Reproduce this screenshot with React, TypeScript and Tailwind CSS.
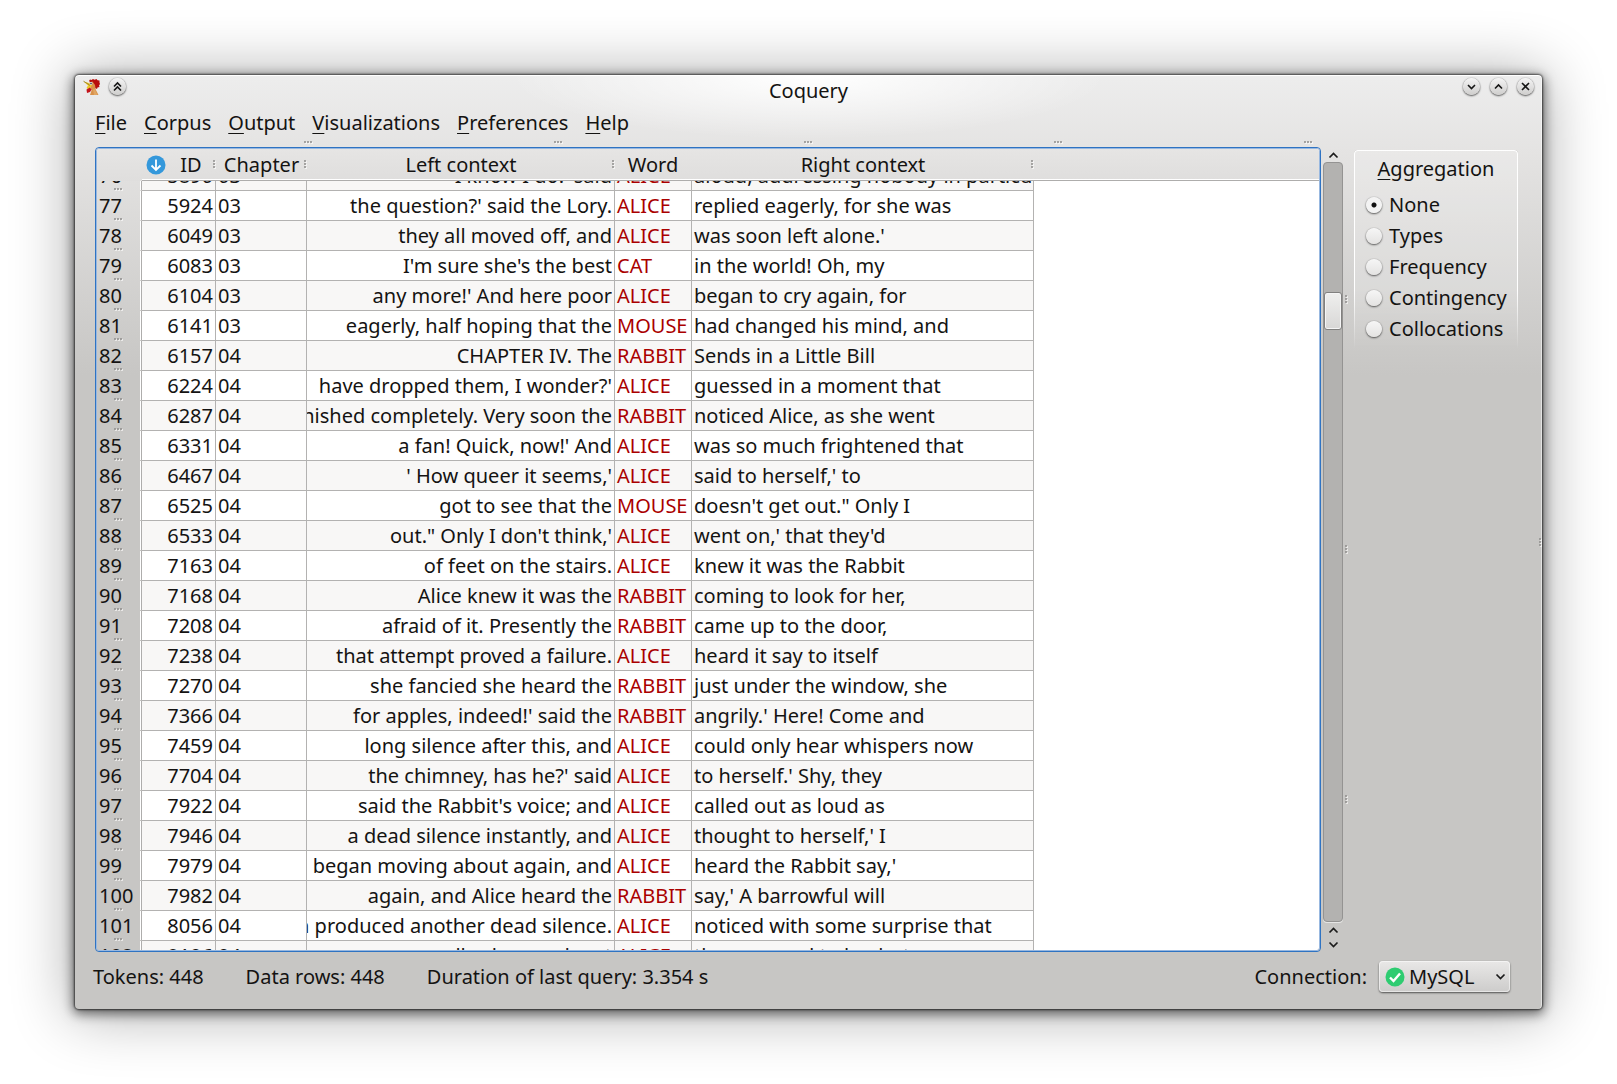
import React from "react";

type Row = [number, number, string, string, string, string];

const rows: Row[] = [
  [76, 5890, "03", "'I know I do!' said", "ALICE", "aloud, addressing nobody in particular"],
  [77, 5924, "03", "the question?' said the Lory.", "ALICE", "replied eagerly, for she was"],
  [78, 6049, "03", "they all moved off, and", "ALICE", "was soon left alone.'"],
  [79, 6083, "03", "I'm sure she's the best", "CAT", "in the world! Oh, my"],
  [80, 6104, "03", "any more!' And here poor", "ALICE", "began to cry again, for"],
  [81, 6141, "03", "eagerly, half hoping that the", "MOUSE", "had changed his mind, and"],
  [82, 6157, "04", "CHAPTER IV. The", "RABBIT", "Sends in a Little Bill"],
  [83, 6224, "04", "have dropped them, I wonder?'", "ALICE", "guessed in a moment that"],
  [84, 6287, "04", "vanished completely. Very soon the", "RABBIT", "noticed Alice, as she went"],
  [85, 6331, "04", "a fan! Quick, now!' And", "ALICE", "was so much frightened that"],
  [86, 6467, "04", "' How queer it seems,'", "ALICE", "said to herself,' to"],
  [87, 6525, "04", "got to see that the", "MOUSE", "doesn't get out.\" Only I"],
  [88, 6533, "04", "out.\" Only I don't think,'", "ALICE", "went on,' that they'd"],
  [89, 7163, "04", "of feet on the stairs.", "ALICE", "knew it was the Rabbit"],
  [90, 7168, "04", "Alice knew it was the", "RABBIT", "coming to look for her,"],
  [91, 7208, "04", "afraid of it. Presently the", "RABBIT", "came up to the door,"],
  [92, 7238, "04", "that attempt proved a failure.", "ALICE", "heard it say to itself"],
  [93, 7270, "04", "she fancied she heard the", "RABBIT", "just under the window, she"],
  [94, 7366, "04", "for apples, indeed!' said the", "RABBIT", "angrily.' Here! Come and"],
  [95, 7459, "04", "long silence after this, and", "ALICE", "could only hear whispers now"],
  [96, 7704, "04", "the chimney, has he?' said", "ALICE", "to herself.' Shy, they"],
  [97, 7922, "04", "said the Rabbit's voice; and", "ALICE", "called out as loud as"],
  [98, 7946, "04", "a dead silence instantly, and", "ALICE", "thought to herself,' I"],
  [99, 7979, "04", "began moving about again, and", "ALICE", "heard the Rabbit say,'"],
  [100, 7982, "04", "again, and Alice heard the", "RABBIT", "say,' A barrowful will"],
  [101, 8056, "04", "which produced another dead silence.", "ALICE", "noticed with some surprise that"],
  [102, 8106, "04", "small cakes, and, not", "ALICE", "they seemed to be, but"],
];

const menus = ["File", "Corpus", "Output", "Visualizations", "Preferences", "Help"];
const modes = ["None", "Types", "Frequency", "Contingency", "Collocations"];

function Grip({ vertical = false, className = "" }: { vertical?: boolean; className?: string }) {
  return (
    <svg
      width={vertical ? 3 : 9}
      height={vertical ? 9 : 3}
      className={`block shrink-0 ${className}`}
      aria-hidden="true"
    >
      {[0, 3, 6].map((p) => (
        <g key={p}>
          <rect x={vertical ? 1 : p + 1} y={vertical ? p + 1 : 1} width="2" height="2" fill="#fff" fillOpacity=".6" />
          <rect x={vertical ? 0 : p} y={vertical ? p : 0} width="2" height="2" fill="#8d8c8b" fillOpacity=".75" />
        </g>
      ))}
    </svg>
  );
}

function Rooster() {
  return (
    <svg width="18" height="18" viewBox="0 0 18 18" aria-hidden="true">
      <path d="M6 3 7 1.500 8.500 2 10 1l1.500.8L13.500 1l1 1.200 2 .3v2l.5 1.500-1 1.500.5 1.500-2 .5-.5 1.500-2-1-3-4z" fill="#b80d0d" />
      <path d="M6.500 4.500 9.500 3.500l2.500 3.500.7 4.500L15.500 17H7l1.500-4.500-1-3L6 8z" fill="#d9914a" />
      <path d="M10 11.500 12 11l1 3 1.500 3H11z" fill="#e0a663" />
      <path d="M.5 3.500 6 5l3 2-1.500 2.500-2.500 1.700-1.500-1.200L5 7.500z" fill="#edc629" />
      <path d="M.5 3.200 5 6 7 7.500" stroke="#8d7a22" strokeWidth=".8" fill="none" />
      <path d="M3.500 11.500 7 9.500l1.500 2-1.500 2.500-3 1z" fill="#c3141b" />
      <circle cx="8" cy="5.500" r="1.400" fill="#d8dbe4" />
      <circle cx="8" cy="5.500" r=".8" fill="#333a4a" />
    </svg>
  );
}

function RoundButton({ label, children }: { label: string; children: React.ReactNode }) {
  return (
    <button
      aria-label={label}
      className="flex size-[17px] items-center justify-center rounded-full bg-linear-to-b from-[#f4f4f4] to-[#cfcecd] shadow-[0_1px_2px_rgba(0,0,0,0.6),0_0_1px_rgba(0,0,0,0.5)]"
    >
      <svg width="13" height="13" viewBox="0 0 13 13" fill="none" stroke="#161616" strokeWidth="1.600">
        {children}
      </svg>
    </button>
  );
}

function Arrow({ down = false }: { down?: boolean }) {
  return (
    <svg width="11" height="8" viewBox="0 0 11 8" fill="none" stroke="#1b1b1b" strokeWidth="1.700" aria-hidden="true">
      <path d={down ? "M1.500 1.500 5.500 5.500 9.500 1.500" : "M1.500 6.500 5.500 2.500 9.500 6.500"} />
    </svg>
  );
}

function HeadCell({ children, sorted = false, grip = true }: { children: React.ReactNode; sorted?: boolean; grip?: boolean }) {
  return (
    <th scope="col" className="h-8 border-b border-[#aeadac] bg-linear-to-b from-[#e6e5e4] to-[#dfdedd] p-0 font-normal leading-[27px] shadow-[inset_0_-1px_0_#fff]">
      <div className="flex items-center">
        {sorted && (
          <svg width="20" height="20" viewBox="0 0 20 20" className="ml-1 shrink-0" aria-label="Sorted ascending">
            <circle cx="10" cy="10" r="9.500" fill="#3498db" />
            <path d="M10 4.500V15M5.500 10.500 10 15l4.500-4.500" stroke="#fff" strokeWidth="1.800" fill="none" />
          </svg>
        )}
        <span className="flex-1 pl-[3px]">{children}</span>
        {grip ? <Grip vertical /> : <span className="w-1" />}
      </div>
    </th>
  );
}

function ResultsTable() {
  return (
    <div className="min-w-0 flex-1 overflow-hidden rounded-[4px] border border-[#2f73c2]">
      <div className="relative h-full overflow-hidden rounded-[3px] border border-[#98b8e0]">
        <div className="absolute inset-y-0 left-[45px] right-0 -z-10 bg-white" />
        <table className="-mt-5 w-full table-fixed border-separate border-spacing-0">
          <colgroup>
            <col className="w-[45px]" />
            <col className="w-[74px]" />
            <col className="w-[91px]" />
            <col className="w-[308px]" />
            <col className="w-[77px]" />
            <col className="w-[342px]" />
            <col />
          </colgroup>
          <thead className="sticky top-0 z-10">
            <tr>
              <td className="bg-linear-to-b from-[#e6e5e4] to-[#dfdedd]" />
              <HeadCell sorted>ID</HeadCell>
              <HeadCell>Chapter</HeadCell>
              <HeadCell>Left context</HeadCell>
              <HeadCell grip={false}>Word</HeadCell>
              <HeadCell>Right context</HeadCell>
              <td className="border-b border-[#aeadac] bg-linear-to-b from-[#e6e5e4] to-[#dfdedd] shadow-[inset_0_-1px_0_#fff]" />
            </tr>
          </thead>
          <tbody>
            {rows.map(([n, id, chapter, left, word, right]) => (
              <tr key={n} className="group h-[30px] whitespace-nowrap leading-[29px]">
                <th scope="row" className="relative border-b border-r border-b-transparent border-r-[#aeadac] p-0 pl-0.5 text-left font-normal shadow-[inset_-1px_0_0_#fff]">
                  {n}
                  <Grip className="absolute -bottom-px left-[17px]" />
                </th>
                <td className="border-b border-r border-[#b3b2b1] p-0 pr-0.5 text-right group-even:bg-white group-odd:bg-[#f8f7f6]">{id}</td>
                <td className="border-b border-r border-[#b3b2b1] p-0 pl-0.5 group-even:bg-white group-odd:bg-[#f8f7f6]">{chapter}</td>
                <td className="border-b border-r border-[#b3b2b1] p-0 pr-0.5 group-even:bg-white group-odd:bg-[#f8f7f6]">
                  <div className="flex justify-end overflow-hidden">{left}</div>
                </td>
                <td className="border-b border-r border-[#b3b2b1] p-0 pl-0.5 text-[#aa0000] group-even:bg-white group-odd:bg-[#f8f7f6]">{word}</td>
                <td className="overflow-hidden border-b border-r border-[#b3b2b1] p-0 pl-0.5 group-even:bg-white group-odd:bg-[#f8f7f6]">{right}</td>
                <td className="p-0" />
              </tr>
            ))}
          </tbody>
        </table>
      </div>
    </div>
  );
}

function ScrollBar() {
  return (
    <div className="ml-0.5 flex w-5 flex-col items-center">
      <div className="flex h-[15px] items-center"><Arrow /></div>
      <div className="w-full flex-1 rounded-[4px] border border-[#949392] bg-[#b3b2b0] pt-[129px] shadow-[0_1px_0_#e6e6e5]">
        <div className="h-[38px] rounded-[3px] border border-[#81807f] bg-linear-to-b from-[#efefee] to-[#d8d7d6] shadow-[inset_0_0_0_1px_#f5f5f5]" />
      </div>
      <div className="flex h-[30px] flex-col items-center justify-around"><Arrow /><Arrow down /></div>
    </div>
  );
}

function Aggregation() {
  return (
    <fieldset className="relative h-[200px] w-[164px] text-center">
      <div className="pointer-events-none absolute inset-0 rounded-[4px] border border-b-0 border-white bg-white/20 mask-[linear-gradient(to_bottom,black_70%,transparent)] shadow-[1px_0_1px_rgba(0,0,0,0.4),-1px_0_1px_rgba(0,0,0,0.25)]" />
      <legend className="relative float-left w-full pt-[5px] leading-7">
        <span className="underline decoration-1 underline-offset-3">A</span>ggregation
      </legend>
      <div className="relative clear-both pl-3 pt-1.5 text-left">
        {modes.map((m) => (
          <label key={m} className="flex h-[31px] items-center gap-[7px]">
            <input
              type="radio"
              name="aggregation"
              defaultChecked={m === "None"}
              className="size-4 appearance-none rounded-full bg-linear-to-b from-[#f6f6f6] to-[#e4e3e2] shadow-[0_1px_2px_rgba(0,0,0,0.6),0_0_1px_rgba(0,0,0,0.4)] checked:bg-[radial-gradient(circle,#111_2px,#f3f3f3_3px)]"
            />
            {m}
          </label>
        ))}
      </div>
    </fieldset>
  );
}

export default function App() {
  return (
    <div className="flex h-screen bg-white p-[75px] font-['Noto_Sans',sans-serif] text-xl leading-7 text-[#141312]">
      <div className="relative isolate flex min-w-0 flex-1 flex-col rounded-[4px] bg-[#c7c6c4] bg-[radial-gradient(ellipse_300px_64px_at_50%_0,white,transparent),linear-gradient(to_bottom,#ededed,#e4e3e2_80px,#c7c6c4_300px)] bg-no-repeat shadow-[0_0_2px_1px_rgba(0,0,0,0.6),0_3px_12px_2px_rgba(0,0,0,0.55),0_2px_60px_4px_rgba(0,0,0,0.32),inset_0_1px_0_#fff,inset_-1px_0_0_rgba(255,255,255,0.5)]">
        <header className="flex h-[30px] items-start px-2 pt-0.5">
          <div className="flex h-[19px] w-[100px] items-center gap-2">
            <Rooster />
            <RoundButton label="Shade window">
              <path d="M3 6.500 6.500 3 10 6.500M3 10.500 6.500 7 10 10.500" />
            </RoundButton>
          </div>
          <h1 className="flex-1 text-center leading-[27px]">Coquery</h1>
          <div className="flex h-[19px] w-[100px] items-center justify-end gap-2.5">
            <RoundButton label="Minimize"><path d="M3 5 6.500 8.500 10 5" /></RoundButton>
            <RoundButton label="Maximize"><path d="M3 8.500 6.500 5 10 8.500" /></RoundButton>
            <RoundButton label="Close"><path d="M3 3 10 10M10 3 3 10" /></RoundButton>
          </div>
        </header>
        <nav className="flex h-9 items-center gap-[17px] pl-5">
          {menus.map((m) => (
            <button key={m}>
              <span className="underline decoration-1 underline-offset-3">{m[0]}</span>
              {m.slice(1)}
            </button>
          ))}
        </nav>
        <div className="flex h-1.5 gap-[241px] overflow-hidden pl-[229px]">
          <Grip /><Grip /><Grip /><Grip /><Grip />
        </div>
        <main className="flex min-h-0 flex-1 pl-5">
          <ResultsTable />
          <ScrollBar />
          <div className="flex w-[11px] flex-col gap-[241px] pl-0.5 pt-[148px]">
            <Grip vertical /><Grip vertical /><Grip vertical />
          </div>
          <div className="mr-6 pt-[3px]"><Aggregation /></div>
        </main>
        <footer className="flex h-[57px] items-start gap-[42px] pl-[18px] pr-8 pt-[9px] leading-[31px]">
          <span>Tokens: 448</span>
          <span>Data rows: 448</span>
          <span className="flex-1">Duration of last query: 3.354 s</span>
          <div className="flex gap-3">
            <label htmlFor="connection">Connection:</label>
            <div className="relative h-[31px] w-[131px] rounded-[4px] bg-linear-to-b from-[#e9e8e7] to-[#cdcccb] shadow-[0_1px_2px_rgba(0,0,0,0.6),inset_0_0_0_1px_rgba(255,255,255,0.5)]">
              <select id="connection" className="h-full w-full appearance-none bg-transparent pl-[30px] leading-[29px]">
                <option>MySQL</option>
              </select>
              <svg width="20" height="20" viewBox="0 0 20 20" className="pointer-events-none absolute left-1.5 top-1.5" aria-hidden="true">
                <circle cx="10" cy="10" r="9.500" fill="#2ecc71" />
                <path d="M5 10.500 8.500 14 15 6.500" stroke="#fff" strokeWidth="2.400" fill="none" />
              </svg>
              <span className="pointer-events-none absolute right-1 top-3"><Arrow down /></span>
            </div>
          </div>
        </footer>
        <Grip vertical className="absolute right-0 top-1/2 -translate-y-1" />
      </div>
    </div>
  );
}
